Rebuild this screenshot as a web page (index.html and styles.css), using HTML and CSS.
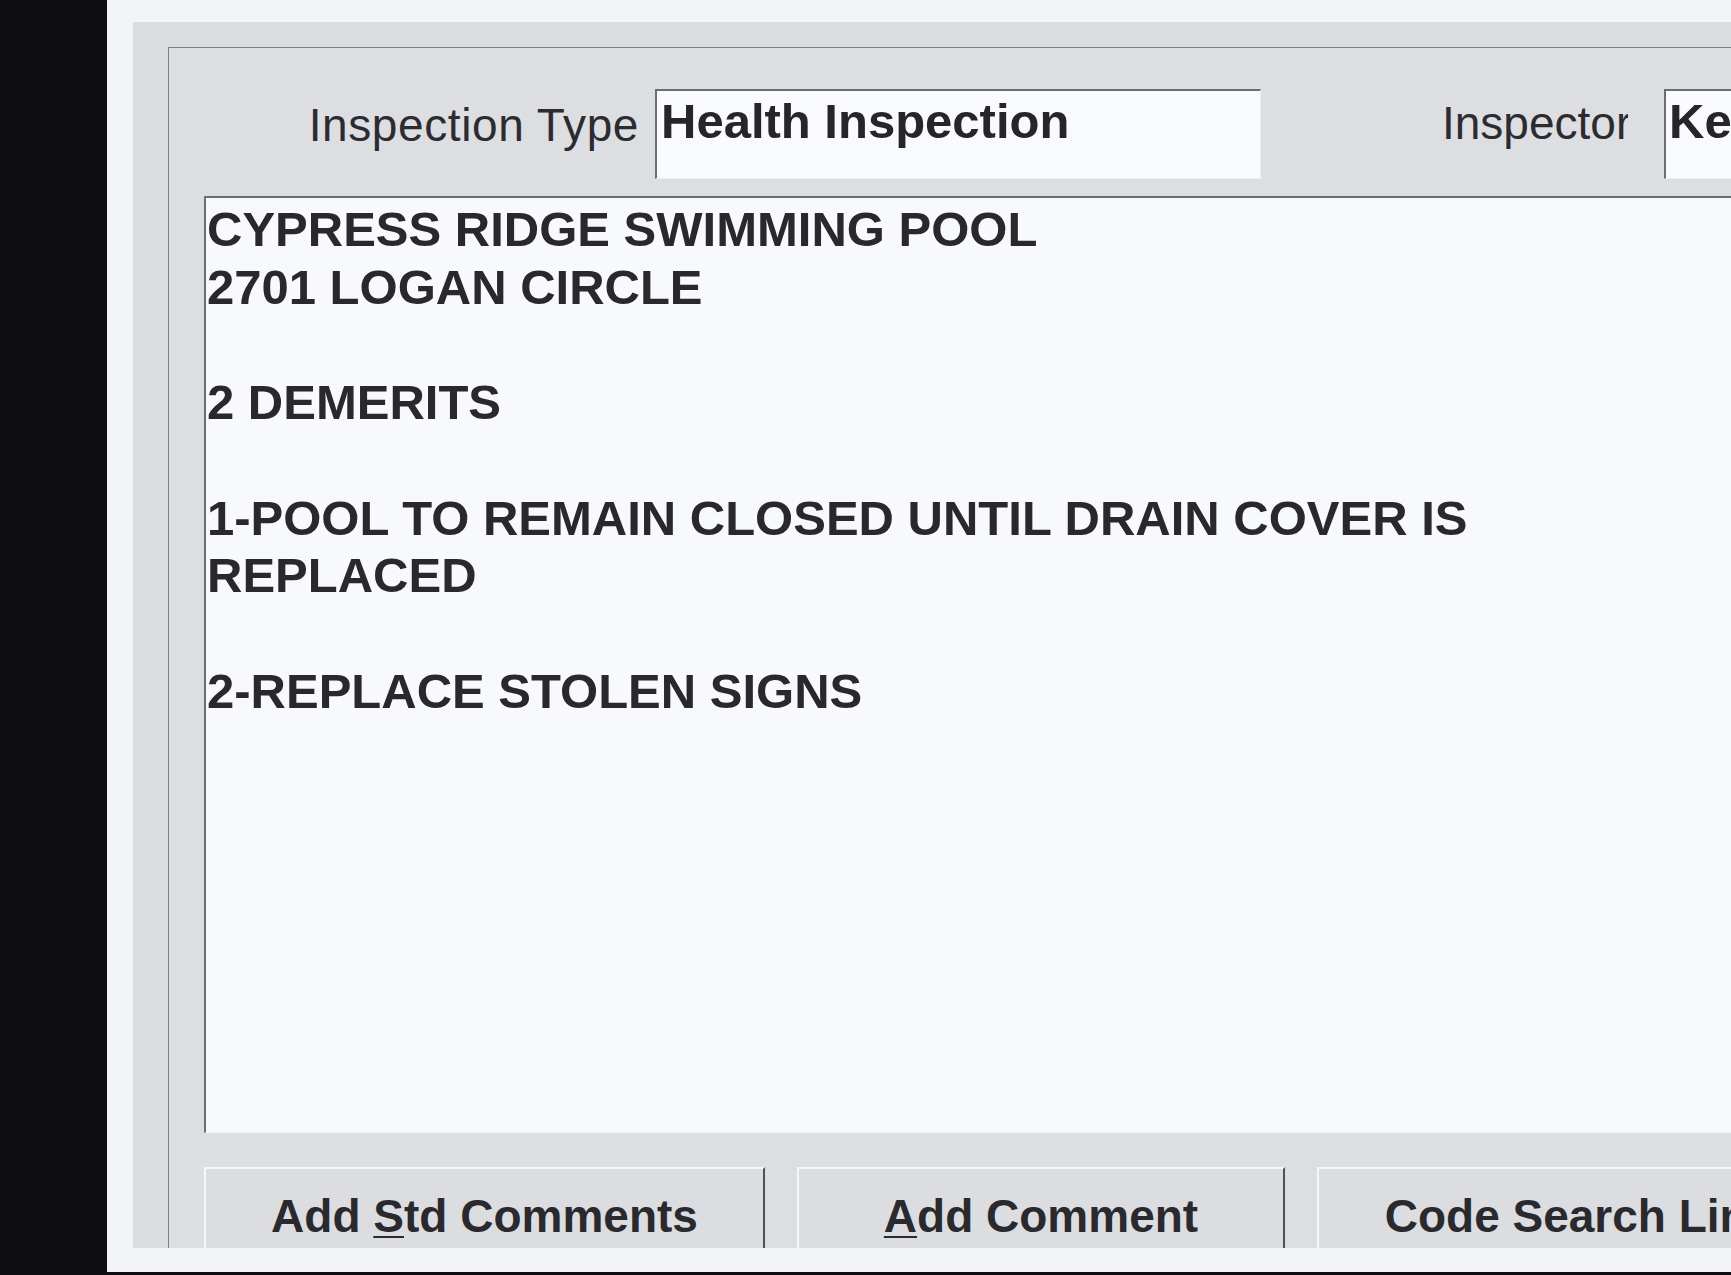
FILE: index.html
```html
<!DOCTYPE html>
<html>
<head>
<meta charset="utf-8">
<title>Inspection Comments</title>
<link rel="stylesheet" href="styles.css">
</head>
<body>
<div class="page">
  <div class="panel">
    <div class="group">
      <div class="row">
        <div class="label label-type">Inspection Type</div>
        <div class="field field-type">Health Inspection</div>
        <div class="label label-insp"><span class="clip">Inspector</span></div>
        <div class="field field-insp">Ke</div>
      </div>
      <div class="memo"><div class="memo-text">CYPRESS RIDGE SWIMMING POOL
2701 LOGAN CIRCLE

2 DEMERITS

1-POOL TO REMAIN CLOSED UNTIL DRAIN COVER IS
REPLACED

2-REPLACE STOLEN SIGNS</div></div>
      <div class="buttons">
        <div class="btn btn-std">Add <u>S</u>td Comments</div>
        <div class="btn btn-add"><u>A</u>dd Comment</div>
        <div class="btn btn-code">Code Search Link</div>
      </div>
    </div>
  </div>
</div>
</body>
</html>
```
FILE: styles.css
```css
html, body {
  margin: 0;
  padding: 0;
}
body {
  background: #0e0e10;
  width: 1731px;
  height: 1275px;
  overflow: hidden;
  font-family: "Liberation Sans", Arial, sans-serif;
  color: #2a2a2e;
}
.page {
  margin-left: 107px;
  width: 1624px;
  height: 1272px;
  background: #f3f4f6;
  padding-top: 22px;
  padding-left: 26px;
  box-sizing: border-box;
  overflow: hidden;
}
.panel {
  width: 1700px;
  height: 1226px;
  background: #dcdde0;
  padding-top: 25px;
  padding-left: 35px;
  box-sizing: border-box;
  overflow: hidden;
}
.group {
  height: 1201px;
  border-top: 1px solid #7e7f83;
  border-left: 1px solid #7e7f83;
  padding-left: 35px;
  box-sizing: border-box;
  background: #dddee1;
}
.row {
  display: flex;
  align-items: flex-start;
  margin-top: 41px;
  height: 90px;
}
.label {
  flex: none;
  box-sizing: border-box;
  font-size: 46px;
  line-height: 1.15;
  margin-top: 10px;
  white-space: nowrap;
  color: #2c2c30;
}
.label-type {
  width: 451px;
  text-align: right;
  padding-right: 16px;
  letter-spacing: 0.6px;
}
.label-insp {
  width: 403px;
  padding-left: 181px;
  margin-top: 8px;
}
.clip {
  display: inline-block;
  width: 186px;
  overflow: hidden;
  vertical-align: top;
}
.field {
  flex: none;
  box-sizing: border-box;
  height: 90px;
  background: #f9fafb;
  border-top: 2px solid #6c6d71;
  border-left: 2px solid #6c6d71;
  border-bottom: 1px solid #eeeff1;
  border-right: 1px solid #eeeff1;
  font-size: 49px;
  font-weight: bold;
  line-height: 1.15;
  padding-top: 2px;
  padding-left: 4px;
  white-space: nowrap;
  overflow: hidden;
  color: #262629;
}
.field-type {
  width: 606px;
}
.field-insp {
  width: 300px;
  padding-left: 3px;
}
.memo {
  margin-top: 17px;
  width: 1600px;
  height: 937px;
  box-sizing: border-box;
  background: #f8f9fa;
  border-top: 2px solid #6c6d71;
  border-left: 2px solid #6c6d71;
  border-bottom: 1px solid #f2f3f4;
  padding-top: 3px;
  padding-left: 1px;
}
.memo-text {
  white-space: pre;
  font-size: 49px;
  font-weight: bold;
  line-height: 57.7px;
  color: #29292d;
}
.buttons {
  display: flex;
  gap: 32px;
  margin-top: 34px;
}
.btn {
  flex: none;
  height: 81px;
  box-sizing: border-box;
  background: #dcdde0;
  border-top: 2px solid #f5f6f7;
  border-left: 2px solid #f5f6f7;
  border-right: 2px solid #505054;
  padding-top: 21px;
  font-size: 46px;
  font-weight: bold;
  line-height: 1.15;
  text-align: center;
  white-space: nowrap;
  color: #2a2a2e;
}
.btn u {
  text-decoration-thickness: 2px;
  text-underline-offset: 4px;
}
.btn-std {
  width: 561px;
}
.btn-add {
  width: 488px;
}
.btn-code {
  width: 524px;
}
```
